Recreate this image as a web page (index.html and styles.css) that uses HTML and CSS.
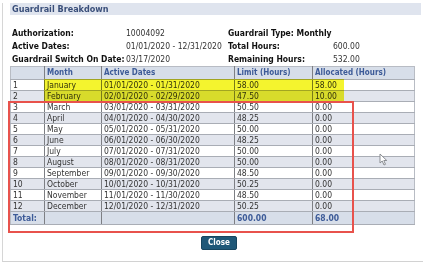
FILE: index.html
```html
<!DOCTYPE html>
<html>
<head>
<meta charset="utf-8">
<link rel="stylesheet" href="styles.css">
</head>
<body>
<div class="dialog">
  <div class="titlebar">Guardrail Breakdown</div>
  <div class="info">
    <div class="info-col left">
      <span class="lbl">Authorization:</span><span class="val">10004092</span>
      <span class="lbl">Active Dates:</span><span class="val">01/01/2020 - 12/31/2020</span>
      <span class="lbl">Guardrail Switch On Date:</span><span class="val">03/17/2020</span>
    </div>
    <div class="info-col right">
      <span class="lbl full">Guardrail Type: Monthly</span>
      <span class="lbl">Total Hours:</span><span class="val">600.00</span>
      <span class="lbl">Remaining Hours:</span><span class="val">532.00</span>
    </div>
  </div>
  <div class="table-wrap">
    <table class="grid">
      <colgroup>
        <col class="c-num"><col class="c-month"><col class="c-dates"><col class="c-limit"><col class="c-alloc">
      </colgroup>
      <thead>
        <tr><th></th><th>Month</th><th>Active Dates</th><th>Limit (Hours)</th><th>Allocated (Hours)</th></tr>
      </thead>
      <tbody>
        <tr><td>1</td><td>January</td><td>01/01/2020 - 01/31/2020</td><td>58.00</td><td>58.00</td></tr>
        <tr><td>2</td><td>February</td><td>02/01/2020 - 02/29/2020</td><td>47.50</td><td>10.00</td></tr>
        <tr><td>3</td><td>March</td><td>03/01/2020 - 03/31/2020</td><td>50.50</td><td>0.00</td></tr>
        <tr><td>4</td><td>April</td><td>04/01/2020 - 04/30/2020</td><td>48.25</td><td>0.00</td></tr>
        <tr><td>5</td><td>May</td><td>05/01/2020 - 05/31/2020</td><td>50.00</td><td>0.00</td></tr>
        <tr><td>6</td><td>June</td><td>06/01/2020 - 06/30/2020</td><td>48.25</td><td>0.00</td></tr>
        <tr><td>7</td><td>July</td><td>07/01/2020 - 07/31/2020</td><td>50.00</td><td>0.00</td></tr>
        <tr><td>8</td><td>August</td><td>08/01/2020 - 08/31/2020</td><td>50.00</td><td>0.00</td></tr>
        <tr><td>9</td><td>September</td><td>09/01/2020 - 09/30/2020</td><td>48.50</td><td>0.00</td></tr>
        <tr><td>10</td><td>October</td><td>10/01/2020 - 10/31/2020</td><td>50.25</td><td>0.00</td></tr>
        <tr><td>11</td><td>November</td><td>11/01/2020 - 11/30/2020</td><td>48.50</td><td>0.00</td></tr>
        <tr><td>12</td><td>December</td><td>12/01/2020 - 12/31/2020</td><td>50.25</td><td>0.00</td></tr>
      </tbody>
      <tfoot>
        <tr><td>Total:</td><td></td><td></td><td>600.00</td><td>68.00</td></tr>
      </tfoot>
    </table>
    <div class="highlight"></div>
    <div class="redbox"></div>
  </div>
  <div class="actions"><button class="btn">Close</button></div>
  <svg class="cursor" width="9" height="13" viewBox="0 0 9 13"><path d="M1 1 L1 10 L3.2 8 L5 12 L6.5 11.3 L4.8 7.5 L7.8 7.5 Z" fill="#fff" stroke="#8a8d92" stroke-width="1"/></svg>
</div>
</body>
</html>
```
FILE: styles.css
```css
html, body {
  margin: 0;
  padding: 0;
}
body {
  width: 423px;
  height: 262px;
  overflow: hidden;
  background: #ffffff;
  font-family: "DejaVu Sans Condensed", "DejaVu Sans", Verdana, sans-serif;
  font-stretch: condensed;
  font-size: 8.5px;
  color: #222;
}
.dialog {
  position: relative;
  height: 258px;
  margin-left: 2px;
  border-left: 1px solid #d6d6d6;
  border-bottom: 1px solid #d2d2d2;
}
.titlebar {
  margin: 3px 2px 0 7px;
  height: 12px;
  line-height: 12px;
  padding-left: 2px;
  background: #dfe4ee;
  color: #3a4f7a;
  font-weight: bold;
  font-size: 9px;
}
.info {
  display: flex;
  margin: 12px 0 0 9px;
  line-height: 13px;
}
.info-col {
  display: grid;
  grid-template-columns: 114px auto;
}
.info-col.left {
  width: 216px;
}
.info-col.right {
  grid-template-columns: 105px auto;
}
.lbl {
  font-weight: bold;
  color: #111;
}
.lbl.full {
  grid-column: 1 / span 2;
}
.val {
  color: #333;
}
.table-wrap {
  position: relative;
  margin-left: 7px;
  width: 404px;
}
.grid {
  width: 404px;
  border-collapse: collapse;
  table-layout: fixed;
  border: 1px solid #b8bcc4;
}
.c-num { width: 34px; }
.c-month { width: 57px; }
.c-dates { width: 133px; }
.c-limit { width: 78px; }
.c-alloc { width: 102px; }
.grid th, .grid td {
  padding: 0 0 0 2px;
  text-align: left;
  white-space: nowrap;
  overflow: hidden;
  border-left: 1px solid #7d7f84;
  border-bottom: 1px solid #a9adb5;
}
.grid th:first-child, .grid td:first-child {
  border-left: 1px solid #b8bcc4;
}
.grid th {
  height: 12px;
  line-height: 12px;
  background: #d7dee9;
  color: #3d5b98;
  font-weight: bold;
  font-size: 8px;
}
.grid tbody td {
  height: 10px;
  line-height: 10px;
  color: #333;
}
.grid tbody tr:nth-child(even) td {
  background: #e2e5ed;
}
.grid tfoot td {
  height: 12px;
  line-height: 12px;
  background: #d7dee9;
  color: #3d5b98;
  font-weight: bold;
}
.highlight {
  position: absolute;
  left: 34px;
  top: 13px;
  width: 300px;
  height: 23px;
  background: #f4f42e;
  mix-blend-mode: multiply;
}
.redbox {
  position: absolute;
  left: -2px;
  top: 35px;
  width: 342px;
  height: 128px;
  border: 2px solid #e8524c;
}
.actions {
  margin-top: 11px;
  padding-left: 198px;
}
.btn {
  width: 36px;
  height: 14px;
  padding: 0;
  border: 1px solid #17455f;
  border-radius: 2px;
  background: #1f5878;
  color: #ffffff;
  font-family: inherit;
  font-stretch: condensed;
  font-weight: bold;
  font-size: 8px;
  line-height: 12px;
}
.cursor {
  position: absolute;
  left: 376px;
  top: 150px;
}
```
